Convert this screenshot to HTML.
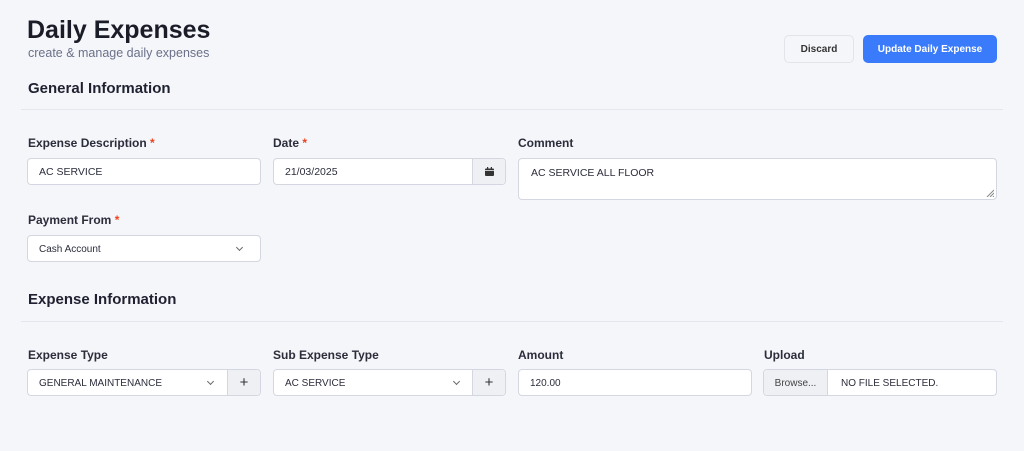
<!DOCTYPE html>
<html><head><meta charset="utf-8"><style>
*{box-sizing:border-box;margin:0;padding:0}
body{width:1024px;height:451px;background:#f5f6fa;font-family:"Liberation Sans",sans-serif;color:#1f2130;position:relative;overflow:hidden}
.a{position:absolute}
h1{position:absolute;left:27px;top:16px;font-size:25px;font-weight:bold;color:#1a1c28}
.sub{left:28px;top:46px;font-size:12.5px;color:#6b7089}
.h2{font-size:15px;font-weight:bold;color:#1f2130}
.hr{left:21px;width:982px;height:1px;background:#e4e6ee}
.lbl{font-size:12px;font-weight:bold;color:#2b2d3b}
.lbl i{font-style:normal;color:#f0421f}
.inp{background:#fff;border:1px solid #d4d7e1;border-radius:4px;height:27px;font-size:10.5px;color:#2b2d3b;padding-left:11px;line-height:27px}
.addon{background:#eef0f4;border-left:1px solid #d4d7e1;position:absolute;top:0;bottom:0;text-align:center;color:#333}
.btn{border-radius:5px;font-size:10px;font-weight:bold;text-align:center;line-height:29px;height:28px}
.chev{position:absolute;top:9px;width:5px;height:5px;border-right:1px solid #666;border-bottom:1px solid #666;transform:rotate(45deg)}
</style></head><body>
<h1>Daily Expenses</h1>
<div class="a sub">create &amp; manage daily expenses</div>
<div class="a btn" style="left:784px;top:35px;width:70px;border:1px solid #e2e4ea;background:#f5f6fa;color:#333;line-height:27px">Discard</div>
<div class="a btn" style="left:863px;top:35px;width:134px;background:#3a7bfc;color:#fff">Update Daily Expense</div>

<div class="a h2" style="left:28px;top:80px">General Information</div>
<div class="a hr" style="top:109px"></div>

<div class="a lbl" style="left:28px;top:136px">Expense Description <i>*</i></div>
<div class="a inp" style="left:27px;top:158px;width:234px">AC SERVICE</div>
<div class="a lbl" style="left:273px;top:136px">Date <i>*</i></div>
<div class="a inp" style="left:273px;top:158px;width:233px">21/03/2025
 <div class="addon" style="right:0;width:33px;border-radius:0 4px 4px 0"><svg width="9" height="9" viewBox="0 0 9 9" style="margin-top:8px;display:block;margin-left:auto;margin-right:auto"><rect x="0" y="1.5" width="9" height="7.5" rx="1" fill="#333"/><rect x="2" y="0" width="1.2" height="2.5" fill="#333"/><rect x="5.8" y="0" width="1.2" height="2.5" fill="#333"/><rect x="0" y="3" width="9" height="0.8" fill="#eef0f4"/></svg></div></div>
<div class="a lbl" style="left:518px;top:136px">Comment</div>
<div class="a inp" style="left:518px;top:158px;width:479px;height:42px;line-height:28px;padding-left:12px">AC SERVICE ALL FLOOR
 <svg class="a" style="right:2px;bottom:2px" width="8" height="8"><path d="M8 1L1 8M8 4L4 8M8 7L7 8" stroke="#888" stroke-width="1"/></svg></div>

<div class="a lbl" style="left:28px;top:213px">Payment From <i>*</i></div>
<div class="a inp" style="left:27px;top:235px;width:234px;font-size:10px">Cash Account<div class="chev" style="right:18px;top:9px"></div></div>

<div class="a h2" style="left:28px;top:291px">Expense Information</div>
<div class="a hr" style="top:321px"></div>

<div class="a lbl" style="left:28px;top:348px">Expense Type</div>
<div class="a inp" style="left:27px;top:369px;width:234px;font-size:10px">GENERAL MAINTENANCE<div class="chev" style="left:180px;top:9px"></div>
 <div class="addon" style="right:0;width:33px;font-size:15px;line-height:25px;border-radius:0 4px 4px 0">+</div></div>
<div class="a lbl" style="left:273px;top:348px">Sub Expense Type</div>
<div class="a inp" style="left:273px;top:369px;width:233px;font-size:10px">AC SERVICE<div class="chev" style="left:180px;top:9px"></div>
 <div class="addon" style="right:0;width:33px;font-size:15px;line-height:25px;border-radius:0 4px 4px 0">+</div></div>
<div class="a lbl" style="left:518px;top:348px">Amount</div>
<div class="a inp" style="left:518px;top:369px;width:234px;font-size:10px">120.00</div>
<div class="a lbl" style="left:764px;top:348px">Upload</div>
<div class="a inp" style="left:763px;top:369px;width:234px;font-size:10px;padding-left:77px">NO FILE SELECTED.
 <div class="addon" style="left:0;width:64px;border-left:none;border-right:1px solid #d4d7e1;border-radius:4px 0 0 4px;font-size:10px;color:#444">Browse...</div></div>
</body></html>
